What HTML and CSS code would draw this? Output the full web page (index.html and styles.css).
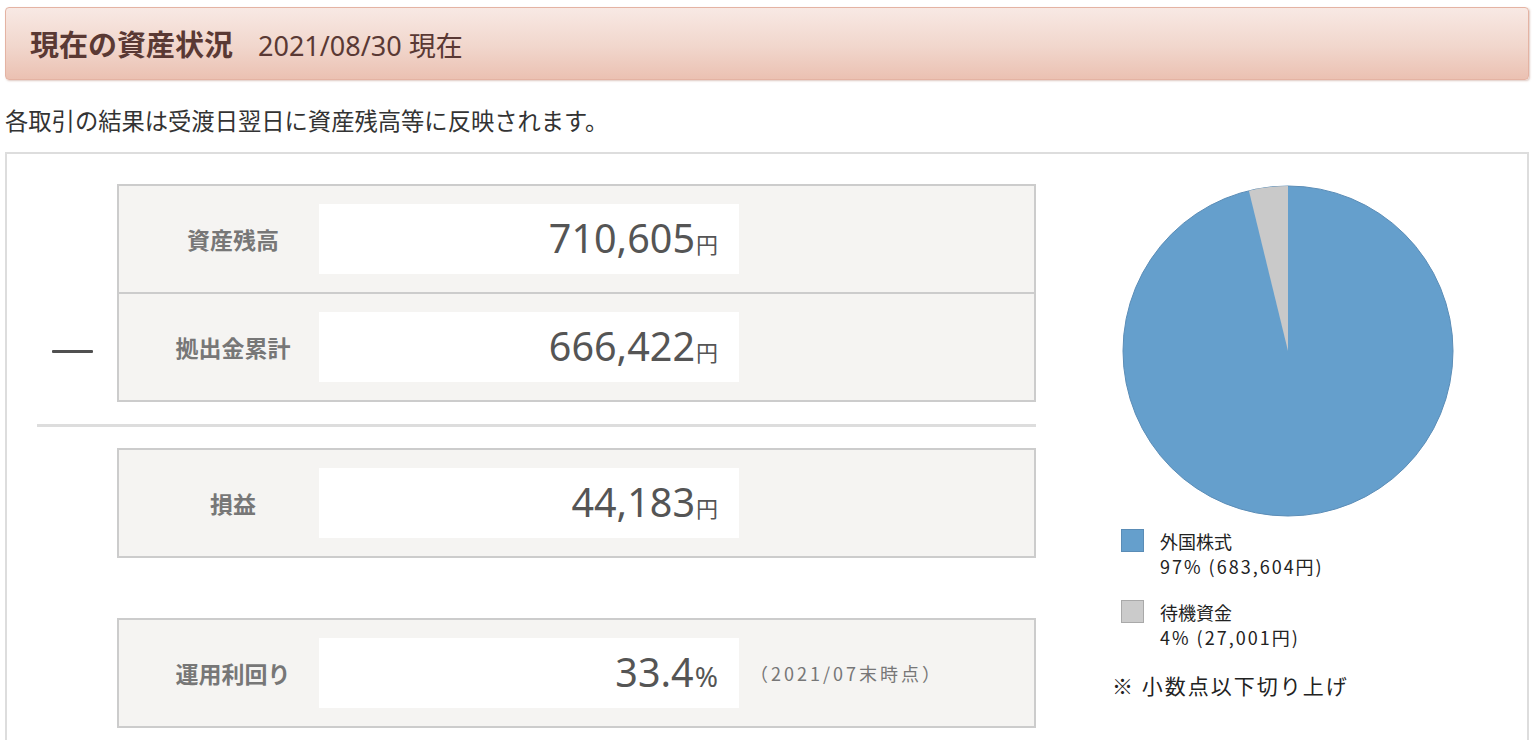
FILE: index.html
```html
<!DOCTYPE html>
<html lang="ja">
<head>
    <meta charset="UTF-8">
    <meta name="viewport" content="width=device-width, initial-scale=1.0">
    <title>現在の資産状況</title>
    <link rel="stylesheet" href="styles.css">
</head>
<body>
    <div class="page">
        <div class="title-bar">
            <h1 class="title">現在の資産状況<span class="title-date">2021/08/30 現在</span></h1>
        </div>

        <p class="notice">各取引の結果は受渡日翌日に資産残高等に反映されます。</p>

        <div class="asset-panel">
            <!-- Summary figures -->
            <div class="asset-summary">
                <div class="calc-group">
                    <div class="operator-col">
                        <div class="operator"><span class="minus-bar"></span></div>
                    </div>
                    <div class="summary-box">
                        <div class="summary-row">
                            <div class="row-label">資産残高</div>
                            <div class="row-value"><span class="amount">710,605<span class="unit">円</span></span></div>
                        </div>
                        <div class="summary-row">
                            <div class="row-label">拠出金累計</div>
                            <div class="row-value"><span class="amount">666,422<span class="unit">円</span></span></div>
                        </div>
                    </div>
                </div>

                <div class="calc-rule"></div>

                <div class="calc-group">
                    <div class="operator-col"></div>
                    <div class="summary-box">
                        <div class="summary-row">
                            <div class="row-label">損益</div>
                            <div class="row-value"><span class="amount">44,183<span class="unit">円</span></span></div>
                        </div>
                    </div>
                </div>

                <div class="calc-group yield-group">
                    <div class="operator-col"></div>
                    <div class="summary-box">
                        <div class="summary-row">
                            <div class="row-label">運用利回り</div>
                            <div class="row-value"><span class="amount">33.4<span class="unit unit-pct">%</span></span></div>
                            <div class="yield-note">（2021/07末時点）</div>
                        </div>
                    </div>
                </div>
            </div>

            <!-- Allocation chart -->
            <div class="asset-chart">
                <svg class="pie" width="332" height="332" viewBox="0 0 332 332">
                    <circle cx="166" cy="166" r="165" fill="#659fcc" stroke="#5b8db7" stroke-width="1"/>
                    <path d="M166 166 L166 1 A165 165 0 0 0 126.9 5.7 Z" fill="#c9c9c9"/>
                </svg>

                <ul class="legend">
                    <li class="legend-item">
                        <span class="legend-swatch swatch-stock"></span>
                        <span class="legend-text">外国株式<br><span class="legend-amount">97% (683,604円)</span></span>
                    </li>
                    <li class="legend-item">
                        <span class="legend-swatch swatch-cash"></span>
                        <span class="legend-text">待機資金<br><span class="legend-amount">4% (27,001円)</span></span>
                    </li>
                </ul>

                <p class="chart-note">※ 小数点以下切り上げ</p>
            </div>
        </div>
    </div>
</body>
</html>
```

FILE: styles.css
```css
* {
    margin: 0;
    padding: 0;
    box-sizing: border-box;
}

body {
    background: #fff;
    color: #333;
    font-family: "Noto Sans CJK JP", sans-serif;
}

.page {
    padding: 7px 5px 0 5px;
}

/* Title bar */
.title-bar {
    height: 73px;
    display: flex;
    align-items: center;
    padding-left: 24px;
    border: 1px solid #e4b3a3;
    border-radius: 4px;
    background: linear-gradient(to bottom, #f8e9e4 0%, #f1d6cc 55%, #ebc1b2 100%);
    box-shadow: 1px 1px 2px rgba(160, 100, 80, 0.35);
}

.title {
    font-size: 29px;
    font-weight: bold;
    line-height: 1;
    color: #5a3934;
}

.title-date {
    margin-left: 25px;
    font-family: "Noto Sans", "Noto Sans CJK JP", sans-serif;
    font-size: 27px;
    font-weight: normal;
}

.notice {
    margin: 24px 0 16px;
    font-size: 23.3px;
    line-height: 32px;
    color: #333;
}

/* Main panel */
.asset-panel {
    display: flex;
    border: 2px solid #ddd;
    padding-bottom: 30px;
}

.asset-summary {
    width: 1029px;
    padding: 30px 0 0 30px;
}

.calc-group {
    display: flex;
}

.yield-group {
    margin-top: 60px;
}

.operator-col {
    width: 80px;
    display: flex;
    flex-direction: column;
    justify-content: flex-end;
}

.operator {
    height: 108px;
    display: flex;
    align-items: center;
    padding: 6px 0 0 15px;
}

.minus-bar {
    width: 41px;
    height: 3px;
    background: #505050;
    border-radius: 1px;
}

.summary-box {
    flex: 1;
    border: 2px solid #ccc;
    background: #f5f4f2;
}

.summary-row {
    height: 106px;
    display: flex;
    align-items: center;
}

.summary-row + .summary-row {
    height: 108px;
    border-top: 2px solid #ccc;
}

.row-label {
    width: 200px;
    padding-left: 28px;
    text-align: center;
    font-size: 23px;
    font-weight: bold;
    color: #777;
}

.row-value {
    width: 420px;
    height: 70px;
    display: flex;
    align-items: center;
    justify-content: flex-end;
    padding-right: 21px;
    background: #fff;
}

.amount {
    font-family: "Noto Sans", "Noto Sans CJK JP", sans-serif;
    font-size: 39.5px;
    line-height: 1;
    color: #555;
}

.unit {
    margin-left: 1px;
    font-family: "Noto Sans CJK JP", sans-serif;
    font-size: 22px;
}

.unit-pct {
    font-family: "Noto Sans", sans-serif;
    font-size: 28px;
}

.yield-note {
    margin-left: 11px;
    font-size: 18px;
    letter-spacing: 3px;
    color: #777;
}

.calc-rule {
    height: 3px;
    margin: 22px 0 21px;
    background: #ddd;
}

/* Pie chart + legend */
.asset-chart {
    padding: 31px 0 0 85px;
}

.pie {
    display: block;
    margin-left: 1px;
}

.legend {
    list-style: none;
    margin-top: 12px;
}

.legend-item {
    display: flex;
    align-items: flex-start;
}

.legend-item + .legend-item {
    margin-top: 21px;
}

.legend-swatch {
    width: 23px;
    height: 23px;
    margin-right: 16px;
    flex-shrink: 0;
}

.swatch-stock {
    background: #659fcc;
    border: 1px solid #5a8cb6;
}

.swatch-cash {
    background: #cbcbcb;
    border: 1px solid #a9a9a9;
}

.legend-text {
    font-size: 18px;
    line-height: 25px;
    color: #222;
}

.legend-amount {
    letter-spacing: 2px;
}

.chart-note {
    margin: 23px 0 0 -9px;
    font-size: 21px;
    line-height: 25px;
    letter-spacing: 2px;
    color: #222;
}
```
